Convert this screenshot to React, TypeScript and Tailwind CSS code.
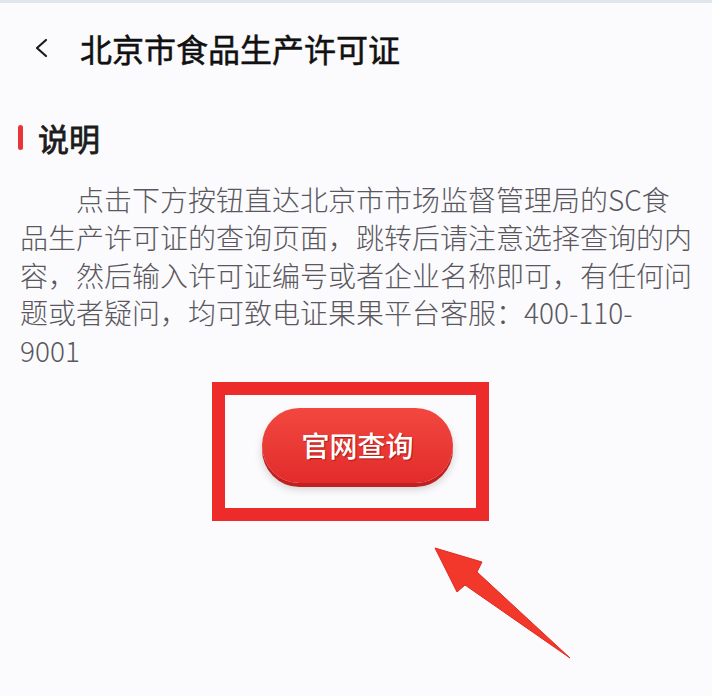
const lines = [
  '品生产许可证的查询页面，跳转后请注意选择查询的内',
  '容，然后输入许可证编号或者企业名称即可，有任何问',
  '题或者疑问，均可致电证果果平台客服：400-110-',
  '9001',
]

export default function App() {
  return (
    <div
      className="w-[712px] h-[696px] overflow-hidden bg-[#fbfbfd] border-t-[3px] border-[#dfe5ec]"
      style={{ fontFamily: '"Noto Sans CJK SC", "Noto Sans", sans-serif' }}
    >
      {/* header */}
      <div className="flex items-center h-[90px]">
        <svg width="14" height="20" viewBox="0 0 14 20" className="ml-[35px]">
          <polyline points="11,2 2,10 11,18" fill="none" stroke="#1a1a1a" strokeWidth="2.2" strokeLinecap="round" strokeLinejoin="round" />
        </svg>
        <div className="ml-[31px] text-[32px] leading-none font-normal text-[#111111] [-webkit-text-stroke:0.5px_#111111]">北京市食品生产许可证</div>
      </div>

      {/* section title */}
      <div className="flex items-center h-[40px] mt-[24px]">
        <div className="ml-[18px] w-[5px] h-[25px] rounded-sm bg-[#e8353a]" />
        <div className="ml-[15px] text-[31px] leading-none font-normal text-[#1c1c1c] [-webkit-text-stroke:0.8px_#1c1c1c]">说明</div>
      </div>

      {/* paragraph */}
      <div className="mt-[24px] pl-[20px] text-[28px] leading-[37.75px] font-light text-[#5a575e] whitespace-nowrap">
        <div className="pl-[56px]">点击下方按钮直达北京市市场监督管理局的SC食</div>
        {lines.map(l => (
          <div key={l}>{l}</div>
        ))}
      </div>

      {/* highlighted button */}
      <div className="mt-[12px] ml-[212px] w-[277px] h-[139px] border-[13px] border-[#ee2b2b] pl-[37px] pt-[13px]">
        <button className="w-[191px] h-[75px] rounded-full bg-gradient-to-b from-[#f2473f] to-[#e22b2b] shadow-[0_4px_0_#c21f1f,0_6px_8px_rgba(0,0,0,0.18)] text-white text-[28px] font-medium [text-shadow:1px_1px_1px_rgba(120,0,0,0.55)] flex items-center justify-center">
          官网查询
        </button>
      </div>

      {/* arrow */}
      <svg width="145" height="118" viewBox="0 0 145 118" className="ml-[430px] mt-[22px] block">
        <polygon
          points="5,5 52,19 47,29 140,115 35,42 27,49"
          fill="#f2372b"
          stroke="#e02a22"
          strokeWidth="1"
          strokeLinejoin="round"
        />
      </svg>
    </div>
  )
}
